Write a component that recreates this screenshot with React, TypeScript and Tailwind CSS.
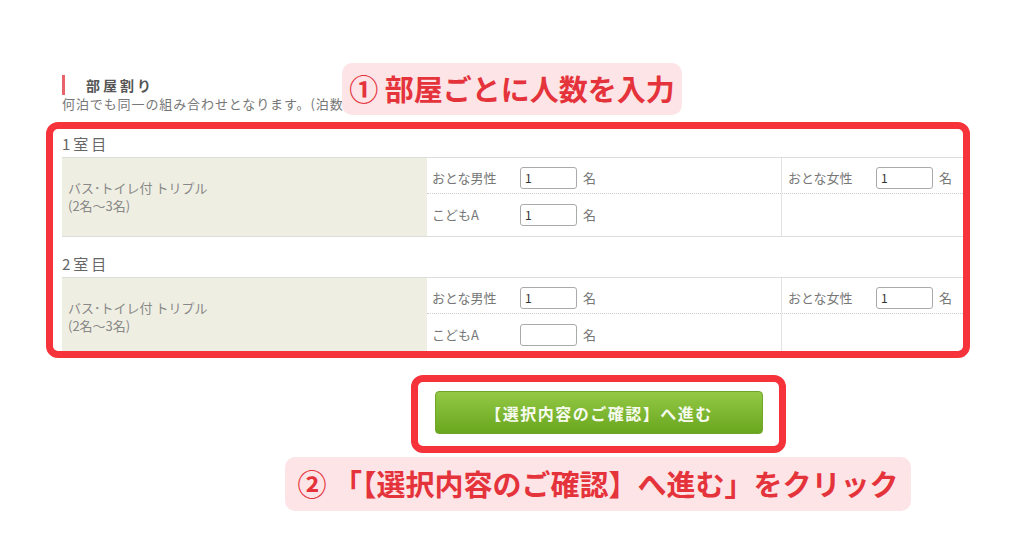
const font = "font-['Noto_Sans_CJK_JP','Noto_Sans',sans-serif]";

const Cell = ({ label, value, wide }: { label: string; value?: string; wide?: boolean }) => (
  <div className={`flex items-center ${wide ? "pl-[5px]" : "pl-[6px]"}`}>
    <span className="w-[88px] text-[13px] text-[#777]">{label}</span>
    <div className="w-[57px] h-[22px] border border-[#aaa] rounded-[3px] bg-white text-[12px] text-[#333] pl-[4px] leading-[20px]">
      {value}
    </div>
    <span className="ml-[6px] text-[13px] text-[#777]">名</span>
  </div>
);

const Room = ({ no, child }: { no: number; child?: string }) => (
  <div>
    <p className="text-[15px] leading-[20px] text-[#666] tracking-[3px]">{no}室目</p>
    <div className="mt-[3px] flex border-t border-b border-[#ddd]">
      <div className="w-[365px] bg-[#efeee2] flex flex-col justify-center pl-[6px] text-[13px] leading-[18px] text-[#888]">
        <span>バス･トイレ付 トリプル</span>
        <span>(2名〜3名)</span>
      </div>
      <div className="flex-1 flex flex-col">
        <div className="h-[36px] flex border-b border-dotted border-[#ccc]">
          <div className="w-[354px] pt-[9px]"><Cell label="おとな男性" value="1" wide /></div>
          <div className="flex-1 border-l border-[#e3e3e3] pt-[9px]"><Cell label="おとな女性" value="1" /></div>
        </div>
        <div className="h-[42px] flex">
          <div className="w-[354px] flex items-center"><Cell label="こどもA" value={child} wide /></div>
          <div className="flex-1 border-l border-[#e3e3e3]" />
        </div>
      </div>
    </div>
  </div>
);

export default function App() {
  return (
    <div className={`relative w-[1024px] h-[538px] bg-white overflow-hidden ${font}`}>
      <div className="pl-[62px] pt-[75px] w-[965px]">
        <div className="h-[20px] border-l-[3px] border-[#e8636a] pl-[21px] flex items-center text-[14px] font-bold text-[#555] tracking-[3px]">
          部屋割り
        </div>
        <p className="text-[13px] leading-[18px] text-[#777] tracking-[0.9px]">何泊でも同一の組み合わせとなります。(泊数</p>

        <div className="mt-[21px]">
          <Room no={1} child="1" />
        </div>
        <div className="mt-[17px]">
          <Room no={2} />
        </div>

        <button className="mt-[34px] ml-[373px] w-[328px] h-[43px] rounded-[4px] bg-gradient-to-b from-[#93c944] to-[#6aa61d] border border-[#6fa52a] text-[#f7fbef] text-[16px] font-bold tracking-[1.5px]">
          【選択内容のご確認】へ進む
        </button>
      </div>

      {/* overlays */}
      <div className="absolute left-[46px] top-[122px] w-[924px] h-[236px] border-[7px] border-[#f6323a] rounded-[12px]" />
      <div className="absolute left-[411px] top-[375px] w-[375px] h-[78px] border-[7px] border-[#f6323a] rounded-[12px]" />

      <div className="absolute left-[342px] top-[63px] w-[340px] h-[52px] bg-[#fde4e6] rounded-[10px] flex items-center justify-center text-[29px] font-bold text-[#e5333b]">
        ① 部屋ごとに人数を入力
      </div>
      <div className="absolute left-[285px] top-[457px] w-[626px] h-[54px] bg-[#fde4e6] rounded-[10px] flex items-center justify-center text-[29px] font-bold text-[#e5333b]">
        ② 「【選択内容のご確認】へ進む」をクリック
      </div>
    </div>
  );
}
